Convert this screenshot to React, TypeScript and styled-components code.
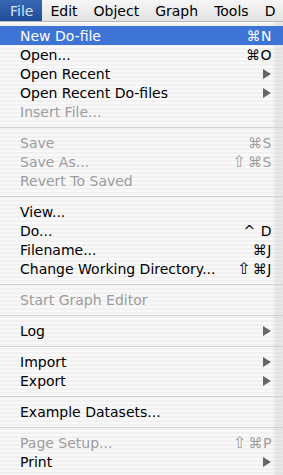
import React from 'react';
import styled, { createGlobalStyle } from 'styled-components';

const GlobalStyle = createGlobalStyle`
  html, body {
    margin: 0;
    padding: 0;
    background: #ffffff;
  }
  body {
    font-family: "DejaVu Sans", "Liberation Sans", sans-serif;
    -webkit-font-smoothing: antialiased;
  }
`;

const Screen = styled.div`
  width: 283px;
  height: 475px;
  overflow: hidden;
  display: flex;
  flex-direction: column;
`;

const MenuBar = styled.div`
  display: flex;
  align-items: stretch;
  height: 22px;
  background: linear-gradient(#f6f6f6, #e2e2e2);
  border-bottom: 1px solid #b9b9b9;
  box-sizing: border-box;
  white-space: nowrap;
`;

const BarItem = styled.div<{ $active?: boolean }>`
  display: flex;
  align-items: center;
  padding: 0 8px;
  font-size: 14px;
  color: ${(p) => (p.$active ? '#d7e2f2' : '#000000')};
  background: ${(p) => (p.$active ? 'linear-gradient(#3868b4, #1d4c98)' : 'transparent')};

  &:first-child {
    padding: 0 9px 0 10px;
  }
`;

const Menu = styled.div`
  flex: 1;
  display: flex;
  flex-direction: column;
  padding-top: 4px;
  background:
    linear-gradient(to right, transparent 272px, rgba(200, 200, 200, 0.35) 276px),
    repeating-linear-gradient(#f9f9f9 0px, #f9f9f9 2px, #f1f1f1 2px, #f1f1f1 4px);
`;

const Item = styled.div<{ $disabled?: boolean; $active?: boolean }>`
  display: flex;
  align-items: center;
  height: 19px;
  padding: 0 11px 0 20px;
  font-size: 14px;
  color: ${(p) => (p.$active ? '#ffffff' : p.$disabled ? '#9c9c9c' : '#000000')};
  background: ${(p) => (p.$active ? '#3d74d6' : 'transparent')};
  white-space: nowrap;
`;

const Label = styled.span`
  flex: 1;
`;

const Shortcut = styled.span`
  display: flex;
  align-items: center;
  gap: 2px;
  font-size: 14px;
  letter-spacing: 0.5px;
`;

const Shift = styled.span`
  font-size: 16px;
  line-height: 1;
`;

const Arrow = styled.svg`
  width: 8px;
  height: 10px;
  margin-right: 1px;
  fill: #666666;
`;

const Separator = styled.div`
  height: 12px;
  display: flex;
  align-items: center;

  &::after {
    content: '';
    flex: 1;
    height: 1px;
    background: #d3d3d3;
  }
`;

type Entry =
  | { sep: true }
  | { label: string; key?: string; shift?: boolean; sub?: boolean; disabled?: boolean; active?: boolean };

const entries: Entry[] = [
  { label: 'New Do-file', key: '⌘N', active: true },
  { label: 'Open...', key: '⌘O' },
  { label: 'Open Recent', sub: true },
  { label: 'Open Recent Do-files', sub: true },
  { label: 'Insert File...', disabled: true },
  { sep: true },
  { label: 'Save', key: '⌘S', disabled: true },
  { label: 'Save As...', key: '⌘S', shift: true, disabled: true },
  { label: 'Revert To Saved', disabled: true },
  { sep: true },
  { label: 'View...' },
  { label: 'Do...', key: '^ D' },
  { label: 'Filename...', key: '⌘J' },
  { label: 'Change Working Directory...', key: '⌘J', shift: true },
  { sep: true },
  { label: 'Start Graph Editor', disabled: true },
  { sep: true },
  { label: 'Log', sub: true },
  { sep: true },
  { label: 'Import', sub: true },
  { label: 'Export', sub: true },
  { sep: true },
  { label: 'Example Datasets...' },
  { sep: true },
  { label: 'Page Setup...', key: '⌘P', shift: true, disabled: true },
  { label: 'Print', sub: true },
];

const App: React.FC = () => {
  return (
    <Screen>
      <GlobalStyle />
      <MenuBar>
        <BarItem $active>File</BarItem>
        <BarItem>Edit</BarItem>
        <BarItem>Object</BarItem>
        <BarItem>Graph</BarItem>
        <BarItem>Tools</BarItem>
        <BarItem>D</BarItem>
      </MenuBar>
      <Menu>
        {entries.map((e, i) =>
          'sep' in e ? (
            <Separator key={i} />
          ) : (
            <Item key={i} $disabled={e.disabled} $active={e.active}>
              <Label>{e.label}</Label>
              {e.key && (
                <Shortcut>
                  {e.shift && <Shift>⇧</Shift>}
                  {e.key}
                </Shortcut>
              )}
              {e.sub && (
                <Arrow viewBox="0 0 8 10">
                  <polygon points="0,0 8,5 0,10" />
                </Arrow>
              )}
            </Item>
          )
        )}
      </Menu>
    </Screen>
  );
};

export default App;
